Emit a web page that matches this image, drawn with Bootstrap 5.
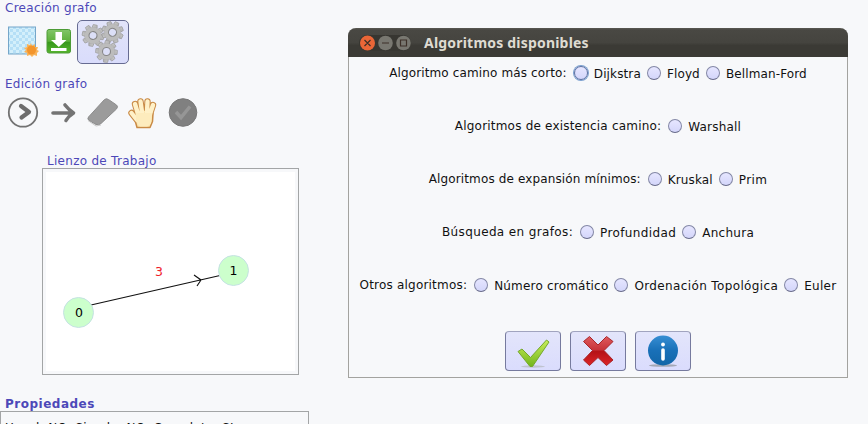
<!DOCTYPE html>
<html lang="es">
<head>
<meta charset="utf-8">
<meta name="viewport" content="width=device-width, initial-scale=1">
<title>Algoritmos disponibles</title>
<link href="https://cdn.jsdelivr.net/npm/bootstrap@5.3.0/dist/css/bootstrap.min.css" rel="stylesheet">
<style>
body{width:868px;height:424px;overflow:hidden;background:#f7f8fa;font:12px/16px "DejaVu Sans",Verdana,sans-serif;color:#111;letter-spacing:.28px}
svg{display:block;flex:none}
.side{width:348px;height:424px;flex:none;overflow:hidden}
.side-title{color:#4d48b8;padding-left:5px;height:16px}
.title-edit{margin-top:12px}
.title-canvas{margin:23px 0 0 42px;height:15px}
.title-props{margin-top:21px;height:15px;letter-spacing:.5px}
.tools-a{height:44px;margin-top:4px;padding-left:7px}
.tools-b{height:34px;margin-top:4px;padding-left:7px}
.ico-save{margin-left:7px}
.tool-active{width:52px;height:44px;border:1px solid #666b91;border-radius:5px;background:linear-gradient(#e2e4fa,#d9dcfb);padding:0;margin-left:6px}
.canvas-box{width:257px;height:207px;margin-left:42px;border:1px solid #a3a5a6;background:#f7f8fa;padding:3px}
.canvas-area{width:249px;height:199px;background:#fff}
.props{width:309px;height:60px;border:1px solid #a3a5a6;padding:8px 4px}
.dialog-win{width:500px;height:350px;margin-top:28px;border-radius:8px 8px 0 0;border:1px solid #a3a39f;border-top:0;background:#f7f8fa;flex:none}
.title-bar{height:29px;margin:0 -1px;border-radius:8px 8px 0 0;background:linear-gradient(#5a5952 0,#494843 2px,#45443f 50%,#3b3a35 60%,#3b3a35);color:#dfdbd2;padding-left:10px}
.title-text{font:700 14px/20px "Noto Sans","DejaVu Sans",sans-serif;letter-spacing:.2px;margin-left:12px}
.opt-row{height:53px;padding-top:8px;gap:6px}
.opt-row>span{margin-right:1px}
.opt-row label{padding-top:1px}
.radio-dot{appearance:none;width:14px;height:14px;border-radius:50%;border:1px solid #8387a6;border-bottom-color:#666989;background:linear-gradient(#e6e6ff,#d4d6fa);margin:0 6px 0 0;flex:none}
.radio-dot.lit{box-shadow:0 0 0 1px #7b9fcf;border-color:#596ea0}
.ls-1{letter-spacing:.13px}
.ls-2{letter-spacing:.2px}
.ls-3{letter-spacing:.37px}
.act{width:56px;height:40px;border:1px solid #767a9e;border-top-color:#a1a4bf;border-radius:4px;background:linear-gradient(#e3e5fb,#dadcfd);padding:0}
.act-row{margin-top:9px;gap:9px}
</style>
<script src="https://cdn.jsdelivr.net/npm/bootstrap@5.3.0/dist/js/bootstrap.bundle.min.js"></script>
</head>
<body class="d-flex m-0">
<section class="side">
  <div class="side-title">Creación grafo</div>
  <div class="tools-a d-flex align-items-center">
    <svg width="32" height="32" viewBox="0 0 32 32"><defs><pattern id="chk" width="6" height="6" patternUnits="userSpaceOnUse"><rect width="6" height="6" fill="#d3effb"/><path d="M0 0h3v3H0zM3 3h3v3H3z" fill="#b5dff6"/></pattern></defs><rect x="1.5" y="1" width="27" height="27" fill="url(#chk)" stroke="#75a6c9"/><path d="M24 17l1 3 3-2 0 3 3 0-1 3 2 1-2 2 0 3-3-1-2 2-2-2-3 1 0-3-3-1 2-2-2-2 3-1 0-3 3 1z" fill="#f9b45a"/><circle cx="24.500" cy="24" r="4.500" fill="#f3952c"/></svg>
    <svg class="ico-save" width="25" height="26" viewBox="0 0 25 26"><defs><linearGradient id="gd" x2="0" y2="1"><stop stop-color="#81c568"/><stop offset=".5" stop-color="#5db13b"/><stop offset=".55" stop-color="#37991b"/><stop offset="1" stop-color="#57b52d"/></linearGradient></defs><rect x="1" y=".5" width="23.500" height="23.500" rx="2" fill="url(#gd)" stroke="#4c9b36"/><path d="M9.500 3h6.500v8h4.500l-7.700 7L5 11h4.500zM5 19h15.500v3H5z" fill="#fff"/></svg>
    <button class="tool-active" aria-label="Algoritmos"><svg width="50" height="42" viewBox="0 0 50 42"><defs><linearGradient id="gm" x2="1" y2="1"><stop stop-color="#cfcfcf"/><stop offset="1" stop-color="#a8a8a8"/></linearGradient>
    <g id="gear"><g fill="url(#gm)" stroke="#999" stroke-width=".7"><path id="gt" d="M-2.600-7.500l.6-3.300h4l.6 3.300z"/><use href="#gt" transform="rotate(45)"/><use href="#gt" transform="rotate(90)"/><use href="#gt" transform="rotate(135)"/><use href="#gt" transform="rotate(180)"/><use href="#gt" transform="rotate(225)"/><use href="#gt" transform="rotate(270)"/><use href="#gt" transform="rotate(315)"/></g><circle r="6" fill="none" stroke="#bcbcbc" stroke-width="4.600"/><circle r="4" fill="#dcdff7" stroke="#868686" stroke-width="1.100"/></g></defs><use href="#gear" transform="translate(15 14.500) rotate(12)"/><use href="#gear" transform="translate(34.500 11.300) rotate(25)"/><use href="#gear" transform="translate(28.500 30.500) rotate(5)"/></svg></button>
  </div>
  <div class="side-title title-edit">Edición grafo</div>
  <div class="tools-b d-flex align-items-center">
    <svg width="195" height="34" viewBox="7 95 195 34">
    <circle cx="23" cy="111.500" r="14.200" fill="none" stroke="#727272" stroke-width="1.800"/><path d="M21 105l8 6-7.500 5.500" fill="none" stroke="#6d6d6d" stroke-width="4.200" stroke-linecap="round" stroke-linejoin="round"/>
    <path d="M53 112h20M65 104q4 5 8.500 8q-5 3-7.500 7.500" fill="none" stroke="#747474" stroke-width="3.600" stroke-linecap="round" stroke-linejoin="round"/>
    <path d="M88.500 116l16-17.500q2-1.500 4 0l8 5.500q2 1.500 0 4L101 122.500q-2 2-5 1l-7-4q-2-1.500-.5-3.500z" fill="#9b9b9b" stroke="#8c8c8c"/><path d="M88 119.500l8 5.500 5-1" fill="none" stroke="#c8c8c8"/>
    <g fill="none" stroke-linecap="round" stroke-linejoin="round"><path d="M138 113l-3-10M142 111l-1.500-10.500M147 111l.5-10.500M150 113l3-9M137 119l-5.500-7" stroke="#c98a45" stroke-width="6.400"/><path d="M135 112l4-3h10l4 3.500-.5 8-2.500 6h-13l-1.500-5.500z" fill="#fbe5ac" stroke="#c98a45" stroke-width="1.500"/><path d="M138 113l-3-10M142 111l-1.500-10.500M147 111l.5-10.500M150 113l3-9M137 119l-5.500-7" stroke="#fff1c8" stroke-width="4.400"/><path d="M137 113h14l-1 9-3 2.500h-7l-3-5z" fill="#fdecbd" stroke="#fdecbd" stroke-width="2"/></g>
    <circle cx="183" cy="111.500" r="13.800" fill="#808080" stroke="#777"/><path d="M176 111l5 5.500 9-11" fill="none" stroke="#969696" stroke-width="3.500"/></svg>
  </div>
  <div class="side-title title-canvas">Lienzo de Trabajo</div>
  <div class="canvas-box"><div class="canvas-area"><svg width="249" height="199" viewBox="46 172 249 199" font-family="DejaVu Sans" font-size="12.500" text-anchor="middle"><path d="M91 305L220 275.500M194 275l7 5-4 6" fill="none" stroke="#111" stroke-width="1.150"/><g fill="#cfc" stroke="#c5e2e3"><circle cx="78.500" cy="312.500" r="15"/><circle cx="233.500" cy="270.500" r="15"/></g><text x="79" y="317">0</text><text x="233.500" y="275">1</text><text x="159" y="276" fill="#ef2028">3</text></svg></div></div>
  <div class="side-title title-props fw-bold">Propiedades</div>
  <div class="props">Usual: NO, Simple: NO, Completo: SI</div>
</section>
<main class="dialog-win">
  <header class="title-bar d-flex align-items-center">
    <svg width="54" height="18" viewBox="0 0 54 18"><rect x="1" y="1" width="52" height="16" rx="8" fill="#373631"/><circle cx="9.500" cy="9" r="7.500" fill="#ea6637"/><g fill="#787770"><circle cx="27.500" cy="9" r="7.300"/><circle cx="45.500" cy="9" r="7.300"/></g><path d="M6.500 6l6 6M12.500 6l-6 6M24 9h7M42.500 6h6v6h-6z" fill="none" stroke="#3d3028" stroke-width="1.200"/></svg>
    <span class="title-text">Algoritmos disponibles</span>
  </header>
  <div>
    <div class="opt-row d-flex justify-content-center"><span class="ls-1">Algoritmo camino más corto:</span><label class="d-flex ls-1"><input type="radio" class="radio-dot lit" name="alg">Dijkstra</label><label class="d-flex ls-1"><input type="radio" class="radio-dot" name="alg">Floyd</label><label class="d-flex ls-1"><input type="radio" class="radio-dot" name="alg">Bellman-Ford</label></div>
    <div class="opt-row d-flex justify-content-center"><span class="ls-2">Algoritmos de existencia camino:</span><label class="d-flex ls-2"><input type="radio" class="radio-dot" name="alg">Warshall</label></div>
    <div class="opt-row d-flex justify-content-center"><span class="ls-1">Algoritmos de expansión mínimos:</span><label class="d-flex ls-1"><input type="radio" class="radio-dot" name="alg">Kruskal</label><label class="d-flex ls-3"><input type="radio" class="radio-dot" name="alg">Prim</label></div>
    <div class="opt-row d-flex justify-content-center"><span class="ls-3">Búsqueda en grafos:</span><label class="d-flex ls-3"><input type="radio" class="radio-dot" name="alg">Profundidad</label><label class="d-flex"><input type="radio" class="radio-dot" name="alg">Anchura</label></div>
    <div class="opt-row d-flex justify-content-center"><span class="ls-2">Otros algoritmos:</span><label class="d-flex ls-2"><input type="radio" class="radio-dot" name="alg">Número cromático</label><label class="d-flex ls-3"><input type="radio" class="radio-dot" name="alg">Ordenación Topológica</label><label class="d-flex"><input type="radio" class="radio-dot" name="alg">Euler</label></div>
  </div>
  <div class="act-row d-flex justify-content-center">
    <button class="act" aria-label="Aceptar"><svg width="54" height="38" viewBox="0 0 54 38"><defs><linearGradient id="ok" x2="0" y2="1"><stop stop-color="#c8ee5b"/><stop offset="1" stop-color="#72b51c"/></linearGradient></defs><ellipse cx="27" cy="34.500" rx="12" ry="1.200" fill="#bfc3cf"/><path d="M12 19.500l4-2.500 8.500 8.500L40.500 8l2.500 2-16.500 24.500h-2.500z" fill="url(#ok)" stroke="#75a82d" stroke-linejoin="round"/></svg></button>
    <button class="act" aria-label="Cancelar"><svg width="54" height="38" viewBox="0 0 54 38"><defs><linearGradient id="no" x2="0" y2="1"><stop stop-color="#df5a5e"/><stop offset=".45" stop-color="#c8343a"/><stop offset=".52" stop-color="#b51217"/><stop offset="1" stop-color="#dc2428"/></linearGradient></defs><path d="M12.500 9.500l6-5 8.500 8.500 8.500-8.500 6.500 5-9 9 9 9.500-6.500 5.500-8.500-8-8.500 8-6-5.500 9-9.500z" fill="url(#no)" stroke="#a8262a" stroke-linejoin="round"/></svg></button>
    <button class="act" aria-label="Información"><svg width="54" height="38" viewBox="0 0 54 38"><defs><linearGradient id="inf" x2="0" y2="1"><stop stop-color="#378ed3"/><stop offset=".5" stop-color="#1970b8"/><stop offset="1" stop-color="#1266a8"/></linearGradient></defs><ellipse cx="27" cy="33.500" rx="14" ry="1.300" fill="#a4a8b5"/><circle cx="27" cy="18.500" r="15" fill="url(#inf)"/><circle cx="27" cy="12.500" r="1.900" fill="#fff"/><path d="M27 18v9" stroke="#fff" stroke-width="3.600" stroke-linecap="round"/></svg></button>
  </div>
</main>
</body>
</html>
